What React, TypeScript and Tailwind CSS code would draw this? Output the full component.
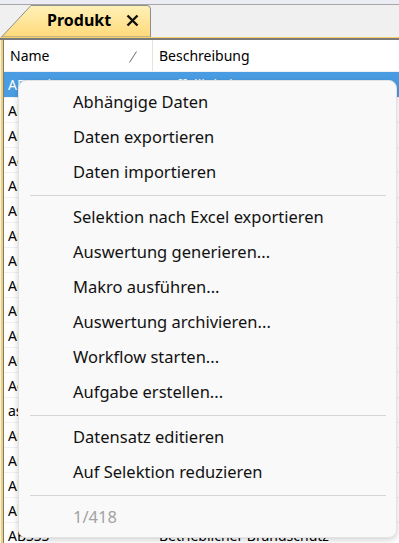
import React from 'react';

const rows: Array<{ name: string; desc: string }> = [
  { name: 'ABS Diagnose', desc: 'Auffälligkeiten ABS/ESP (SET)' },
  { name: 'Abdeckung', desc: 'Abdeckung Motorraum' },
  { name: 'Abgasanlage', desc: 'Abgasanlage komplett' },
  { name: 'Achse', desc: 'Achse vorne' },
  { name: 'Airbag', desc: 'Airbag Fahrerseite' },
  { name: 'Anhänger', desc: 'Anhängerkupplung' },
  { name: 'Antrieb', desc: 'Antriebswelle' },
  { name: 'Armatur', desc: 'Armaturenbrett' },
  { name: 'Aufbau', desc: 'Aufbau Kabine' },
  { name: 'Auspuff', desc: 'Auspuffanlage' },
  { name: 'Außen', desc: 'Außenspiegel' },
  { name: 'Automatik', desc: 'Automatikgetriebe' },
  { name: 'Achslager', desc: 'Achslager hinten' },
  { name: 'as-Teile', desc: 'Austauschteile' },
  { name: 'Anlasser', desc: 'Anlasser 12V' },
  { name: 'Ansaug', desc: 'Ansaugkrümmer' },
  { name: 'Abblend', desc: 'Abblendlicht' },
  { name: 'Absperr', desc: 'Absperrventil' },
  { name: 'ABSSS', desc: 'Betrieblicher Brandschutz' },
];

type MenuEntry = { label: string; disabled?: boolean } | 'sep';

const menu: MenuEntry[] = [
  { label: 'Abhängige Daten' },
  { label: 'Daten exportieren' },
  { label: 'Daten importieren' },
  'sep',
  { label: 'Selektion nach Excel exportieren' },
  { label: 'Auswertung generieren...' },
  { label: 'Makro ausführen...' },
  { label: 'Auswertung archivieren...' },
  { label: 'Workflow starten...' },
  { label: 'Aufgabe erstellen...' },
  'sep',
  { label: 'Datensatz editieren' },
  { label: 'Auf Selektion reduzieren' },
  'sep',
  { label: '1/418', disabled: true },
];

const Tab = () => (
  <div className="relative w-[152px] h-[33px] ml-[1px]">
    <svg className="absolute inset-0" width="152" height="33" viewBox="0 0 152 33">
      <defs>
        <linearGradient id="tabFill" x1="0" y1="0" x2="0" y2="1">
          <stop offset="0" stopColor="#fff1b8" />
          <stop offset="1" stopColor="#ffd97a" />
        </linearGradient>
      </defs>
      <path d="M0.5 33 L30 1.5 L146 1.5 Q149.5 1.5 149.5 5 L149.5 33 Z" fill="url(#tabFill)" stroke="#8e8e8e" strokeWidth="1" />
    </svg>
    <div className="absolute left-[46px] top-[6px] flex items-center gap-[15px]">
      <span className="text-[16px] font-bold text-black leading-[20px]">Produkt</span>
      <svg width="13" height="13" viewBox="0 0 13 13">
        <path d="M1.5 1.5 L11.5 11.5 M11.5 1.5 L1.5 11.5" stroke="#111" strokeWidth="2.4" />
      </svg>
    </div>
  </div>
);

export default function App() {
  return (
    <div
      className="relative w-[399px] h-[543px] overflow-hidden bg-[#f0f0f0]"
      style={{ fontFamily: '"Noto Sans", "Open Sans", sans-serif' }}
    >
      <div className="h-[4px] bg-[#ececf4]" />
      <div className="h-[1px] bg-[#a6a6a6]" />
      <div className="h-[32px] flex items-end">
        <Tab />
      </div>
      <div className="h-[1px] bg-[#f3d16c]" />
      <div className="h-[2px] bg-[#7a7a7a]" />

      <div className="flex">
        <div className="w-[1px] bg-[#f0f0f0]" />
        <div className="w-[2px] bg-[#f3d16c]" />
        <div className="w-[1px] bg-[#7a7a7a]" />
        <div className="flex-1 bg-white text-[14px] text-black">
          <div className="flex h-[32px] items-center border-b border-[#f0f0f0]">
            <div className="relative w-[149px] h-full flex items-center pl-[6px] border-r border-[#e3e3e3]">
              <span>Name</span>
              <svg className="absolute left-[124px] top-[11px]" width="10" height="12" viewBox="0 0 10 12">
                <path d="M8.5 0.5 L1.5 11.5" stroke="#6b6b6b" strokeWidth="1" />
              </svg>
            </div>
            <div className="pl-[6px]">Beschreibung</div>
          </div>
          {rows.map((r, i) => (
            <div
              key={i}
              className={
                i === 0
                  ? 'flex h-[25px] items-center bg-[#4a9ce2] text-white'
                  : 'flex h-[25px] items-center border-t border-[#f0f0f0]'
              }
            >
              <div className="w-[149px] pl-[4px] whitespace-nowrap overflow-hidden">{r.name}</div>
              <div className="pl-[6px] whitespace-nowrap overflow-hidden">{r.desc}</div>
            </div>
          ))}
        </div>
      </div>

      <div className="absolute left-[18px] top-[80px] w-[379px] h-[458px] rounded-[8px] bg-[#f9f9f9] border border-[#e2e2e2] shadow-[0_2px_6px_rgba(0,0,0,0.18)] pt-[4px]">
        {menu.map((m, i) =>
          m === 'sep' ? (
            <div key={i} className="h-[10px] flex items-center pl-[11px] pr-[10px]">
              <div className="h-[1px] w-full bg-[#d6d6d6]" />
            </div>
          ) : (
            <div
              key={i}
              className={
                m.disabled
                  ? 'h-[35px] flex items-center pl-[54px] text-[16.5px] text-[#a3a3a3]'
                  : 'h-[35px] flex items-center pl-[54px] text-[16.5px] text-[#111]'
              }
            >
              {m.label}
            </div>
          )
        )}
      </div>
    </div>
  );
}
